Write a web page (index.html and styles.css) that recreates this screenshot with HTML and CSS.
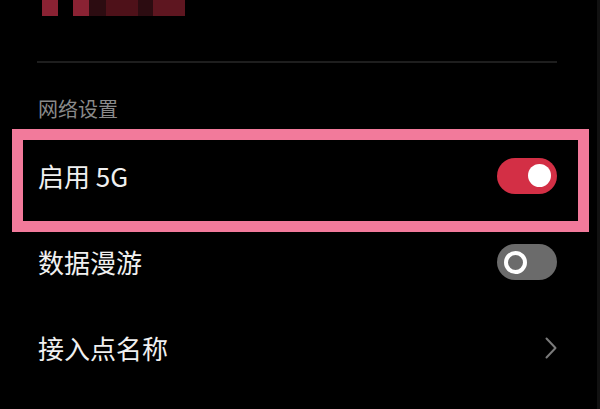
FILE: index.html
```html
<!DOCTYPE html>
<html lang="zh-CN">
<head>
<meta charset="utf-8">
<link rel="stylesheet" href="styles.css">
</head>
<body>
<div class="screen">
  <div class="masked">
    <span class="px px-a w16"></span>
    <span class="px px-0 w15"></span>
    <span class="px px-a w16"></span>
    <span class="px px-d w17"></span>
    <span class="px px-m w32"></span>
    <span class="px px-d w15"></span>
    <span class="px px-b w32"></span>
  </div>
  <div class="divider"></div>
  <div class="section-title">网络设置</div>
  <div class="highlight">
    <div class="row row-first">
      <span class="label">启用 5G</span>
      <span class="switch on"><span class="knob"></span></span>
    </div>
  </div>
  <div class="row row-second">
    <span class="label">数据漫游</span>
    <span class="switch off"><span class="knob"></span></span>
  </div>
  <div class="row row-third">
    <span class="label">接入点名称</span>
    <svg class="chevron" width="12" height="22" viewBox="0 0 12 22"><path d="M1.5 1.5 L10.5 11 L1.5 20.5" fill="none" stroke="#7a7a7a" stroke-width="2" stroke-linecap="round" stroke-linejoin="round"/></svg>
  </div>
</div>
</body>
</html>
```

FILE: styles.css
```css
html, body {
  margin: 0;
  padding: 0;
  background: #000;
}
body {
  width: 600px;
  height: 409px;
  overflow: hidden;
  font-family: "Noto Sans CJK SC", "Noto Sans", sans-serif;
}
.screen {
  width: 597px;
  height: 409px;
  border-right: 3px solid #111;
  background: #000;
}
.masked {
  display: flex;
  height: 16px;
  padding-left: 42px;
}
.px { display: block; height: 16px; }
.px-a { background: #8a2233; }
.px-0 { background: #000; }
.px-d { background: #2c0c11; }
.px-m { background: #4e1119; }
.px-b { background: #5e1620; }
.w15 { width: 15px; }
.w16 { width: 16px; }
.w17 { width: 17px; }
.w32 { width: 32px; }
.divider {
  margin: 45px 40px 0 37px;
  height: 2px;
  background: #1e1e1e;
}
.section-title {
  margin: 36px 0 0 38px;
  height: 20px;
  line-height: 20px;
  font-size: 20px;
  color: #8a8a8a;
}
.highlight {
  margin: 10px 0 0 12px;
  border: 11px solid #f27a9b;
  padding: 0 21px 10px 15px;
  width: 519px;
}
.row {
  display: flex;
  align-items: center;
  justify-content: space-between;
}
.row-first { height: 71px; }
.row-second { height: 60px; padding: 0 40px 0 38px; }
.row-third { height: 112px; padding: 0 40px 0 38px; }
.label {
  font-size: 26px;
  color: #f0f0f0;
  line-height: 30px;
}
.switch {
  position: relative;
  display: block;
  width: 60px;
  height: 36px;
  border-radius: 18px;
}
.switch.on { background: #d32f45; }
.switch.off { background: #6b6b6b; }
.knob {
  position: absolute;
  top: 6.5px;
  width: 23px;
  height: 23px;
  border-radius: 50%;
  box-sizing: border-box;
}
.on .knob { right: 6px; background: #fff; }
.off .knob { left: 7px; border: 4px solid #fff; background: #6b6b6b; }
.chevron { display: block; }
```
